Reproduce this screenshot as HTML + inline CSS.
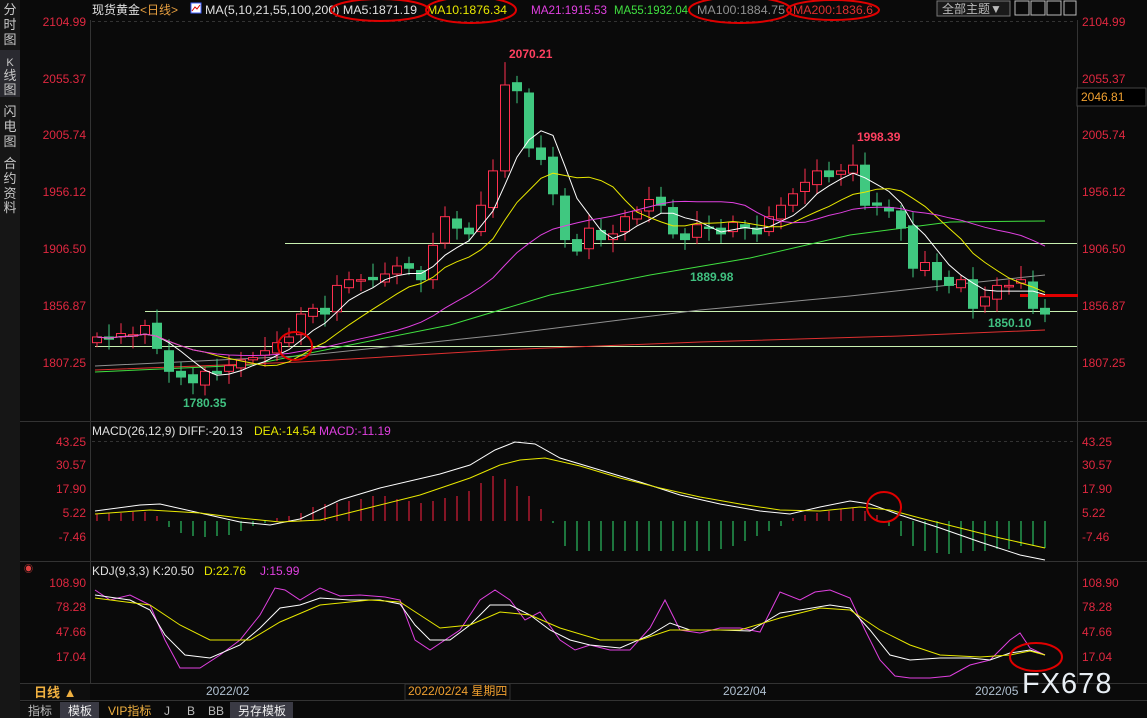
<!DOCTYPE html>
<html><head><meta charset="utf-8">
<style>
html,body{margin:0;padding:0;background:#0a0a0a;width:1147px;height:718px;overflow:hidden;font-family:"Liberation Sans","Noto Sans CJK SC",sans-serif}
svg{position:absolute;left:0;top:0}
</style></head>
<body>
<svg id="s" width="1147" height="718" xmlns="http://www.w3.org/2000/svg" font-family="Liberation Sans, Noto Sans CJK SC, sans-serif">
<rect width="1147" height="718" fill="#0a0a0a"/>
<rect x="0" y="0" width="20" height="718" fill="#161616"/>
<rect x="0" y="50" width="20" height="47" fill="#2a2a30"/>
<g fill="#c8c8c8" font-size="13" text-anchor="middle">
<text x="10" y="14">分</text><text x="10" y="29">时</text><text x="10" y="44">图</text>
<text x="10" y="66" font-size="11">K</text><text x="10" y="80">线</text><text x="10" y="94">图</text>
<text x="10" y="116">闪</text><text x="10" y="131">电</text><text x="10" y="146">图</text>
<text x="10" y="168">合</text><text x="10" y="183">约</text><text x="10" y="198">资</text><text x="10" y="212">料</text>
</g>
<g stroke="#333" stroke-width="1">
<line x1="90.5" y1="20" x2="90.5" y2="684"/>
<line x1="1077.5" y1="20" x2="1077.5" y2="684"/>
<line x1="20" y1="421.5" x2="1147" y2="421.5"/>
<line x1="20" y1="561.5" x2="1147" y2="561.5"/>
<line x1="20" y1="683.5" x2="1147" y2="683.5"/>
<line x1="20" y1="700.5" x2="1147" y2="700.5"/>
</g>
<line x1="92" y1="21.5" x2="1076" y2="21.5" stroke="#333" stroke-dasharray="3,3"/>
<line x1="92" y1="441.5" x2="1076" y2="441.5" stroke="#333" stroke-dasharray="3,3"/>
<text x="92" y="14" font-size="12" fill="#e0e0e0">现货黄金<tspan fill="#e8a040">&lt;日线&gt;</tspan></text>
<rect x="191" y="3" width="10" height="10" fill="#fff" stroke="#4060ff"/>
<polyline points="192,11 195,7 197,9 200,5" stroke="#d00" fill="none"/>
<text x="205" y="14" font-size="12" fill="#e0e0e0" textLength="212" lengthAdjust="spacingAndGlyphs">MA(5,10,21,55,100,200) MA5:1871.19</text>
<text x="427" y="14" font-size="12" fill="#e8e800" textLength="80" lengthAdjust="spacingAndGlyphs">MA10:1876.34</text>
<text x="531" y="14" font-size="12" fill="#e040e0" textLength="76" lengthAdjust="spacingAndGlyphs">MA21:1915.53</text>
<text x="614" y="14" font-size="12" fill="#40e040" textLength="74" lengthAdjust="spacingAndGlyphs">MA55:1932.04</text>
<text x="697" y="14" font-size="12" fill="#909090" textLength="88" lengthAdjust="spacingAndGlyphs">MA100:1884.75</text>
<text x="793" y="14" font-size="12" fill="#e03030" textLength="80" lengthAdjust="spacingAndGlyphs">MA200:1836.6</text>
<g fill="none" stroke="#e00000" stroke-width="2">
<ellipse cx="380" cy="10" rx="49" ry="11"/><ellipse cx="471" cy="10" rx="45" ry="13"/>
<ellipse cx="740" cy="10" rx="51" ry="13"/><ellipse cx="833" cy="10" rx="46" ry="10"/>
</g>
<rect x="937" y="1" width="73" height="15" fill="#1a1a1a" stroke="#777"/>
<text x="942" y="13" font-size="12" fill="#bbb">全部主题▼</text>
<g fill="none" stroke="#bbb"><rect x="1015" y="1" width="14" height="14"/><rect x="1031" y="1" width="14" height="14"/><rect x="1047" y="1" width="14" height="14"/><rect x="1064" y="1" width="12" height="14"/></g>
<g font-size="12" fill="#e02840">
<text x="86" y="26" text-anchor="end">2104.99</text><text x="86" y="83" text-anchor="end">2055.37</text>
<text x="86" y="139" text-anchor="end">2005.74</text><text x="86" y="196" text-anchor="end">1956.12</text>
<text x="86" y="253" text-anchor="end">1906.50</text><text x="86" y="310" text-anchor="end">1856.87</text>
<text x="86" y="367" text-anchor="end">1807.25</text>
<text x="1082" y="26">2104.99</text><text x="1082" y="83">2055.37</text>
<text x="1082" y="139">2005.74</text><text x="1082" y="196">1956.12</text>
<text x="1082" y="253">1906.50</text><text x="1082" y="310">1856.87</text>
<text x="1082" y="367">1807.25</text>
<text x="86" y="446" text-anchor="end">43.25</text><text x="86" y="469" text-anchor="end">30.57</text>
<text x="86" y="493" text-anchor="end">17.90</text><text x="86" y="517" text-anchor="end">5.22</text>
<text x="86" y="541" text-anchor="end">-7.46</text>
<text x="1082" y="446">43.25</text><text x="1082" y="469">30.57</text>
<text x="1082" y="493">17.90</text><text x="1082" y="517">5.22</text><text x="1082" y="541">-7.46</text>
<text x="86" y="587" text-anchor="end">108.90</text><text x="86" y="611" text-anchor="end">78.28</text>
<text x="86" y="636" text-anchor="end">47.66</text><text x="86" y="661" text-anchor="end">17.04</text>
<text x="1082" y="587">108.90</text><text x="1082" y="611">78.28</text>
<text x="1082" y="636">47.66</text><text x="1082" y="661">17.04</text>
</g>
<rect x="1077" y="88" width="69" height="18" fill="#000" stroke="#444"/>
<text x="1081" y="101" font-size="12" fill="#f0a030">2046.81</text>
<g stroke="#c8f0b0" stroke-width="1">
<line x1="285" y1="243.5" x2="1077" y2="243.5"/>
<line x1="145" y1="311.5" x2="1077" y2="311.5"/>
<line x1="95" y1="346.5" x2="1077" y2="346.5"/>
</g>
<rect x="1020" y="294" width="58" height="3" fill="#e00000"/>
<polyline points="95,370 300,362 500,350 700,342 900,336 1045,330" stroke="#e03030" fill="none"/>
<polyline points="95,366 300,356 500,335 700,310 850,296 950,285 1045,275" stroke="#909090" fill="none"/>
<polyline points="95,372 250,365 350,345 450,325 550,295 650,275 750,258 850,235 950,222 1045,221" stroke="#40e040" fill="none"/>
<g id="cand"></g>
<g font-size="12" font-weight="bold">
<text x="509" y="58" fill="#ff4060">2070.21</text>
<text x="857" y="141" fill="#ff4060">1998.39</text>
<text x="690" y="281" fill="#40c080">1889.98</text>
<text x="988" y="327" fill="#40c080">1850.10</text>
<text x="183" y="407" fill="#40c080">1780.35</text>
</g>
<ellipse cx="295" cy="346" rx="17" ry="14" fill="none" stroke="#e00000" stroke-width="2"/>
<text x="92" y="435" font-size="12" fill="#e0e0e0">MACD(26,12,9) DIFF:-20.13</text>
<text x="254" y="435" font-size="12" fill="#e8e800">DEA:-14.54</text>
<text x="319" y="435" font-size="12" fill="#e040e0">MACD:-11.19</text>
<g id="hist"></g>
<polyline points="95,511 140,505 160,504 200,513 240,522 270,525 300,519 340,500 380,488 440,474 470,465 495,450 515,442 535,444 560,458 600,470 640,482 680,495 720,504 760,511 790,514 820,507 850,501 870,504 900,515 940,528 980,542 1020,555 1045,560" stroke="#fff" fill="none"/>
<polyline points="95,514 150,510 200,513 240,518 280,522 320,520 360,510 420,495 470,478 500,465 520,460 545,458 580,466 620,478 660,488 700,497 740,504 780,510 820,511 860,507 890,510 920,518 960,528 1000,538 1045,548" stroke="#e8e800" fill="none"/>
<ellipse cx="884" cy="507" rx="17" ry="15" fill="none" stroke="#e00000" stroke-width="2"/>
<text x="24" y="572" font-size="9" fill="#e04040">◉</text>
<text x="92" y="575" font-size="12" fill="#e0e0e0">KDJ(9,3,3) K:20.50</text>
<text x="204" y="575" font-size="12" fill="#e8e800">D:22.76</text>
<text x="260" y="575" font-size="12" fill="#e040e0">J:15.99</text>
<polyline points="95,590 110,600 130,595 150,605 165,640 180,668 200,668 220,655 240,640 260,615 275,588 285,590 300,600 320,588 340,596 360,595 385,597 400,600 415,640 430,650 445,640 460,630 480,600 495,590 510,600 525,620 540,612 560,640 575,650 590,645 610,650 630,650 650,628 665,600 680,630 700,633 720,628 740,628 760,632 780,592 800,600 815,592 830,590 850,598 865,630 880,660 895,676 910,678 930,678 950,676 970,665 990,660 1010,640 1020,633 1030,648 1045,655" stroke="#e040e0" fill="none"/>
<polyline points="95,595 130,600 150,610 165,635 185,655 210,658 240,645 260,628 280,608 300,605 320,598 350,600 380,600 400,604 415,625 430,640 450,640 470,625 490,605 510,605 530,615 550,630 570,640 590,645 620,648 650,635 670,623 690,630 720,630 750,631 780,613 800,610 830,605 850,608 870,630 890,655 910,660 940,658 970,658 990,660 1010,653 1030,650 1045,655" stroke="#fff" fill="none"/>
<polyline points="95,598 150,605 180,625 210,640 250,640 280,622 320,605 370,600 400,602 420,615 440,628 470,625 500,612 530,615 560,628 600,640 640,640 670,630 700,630 740,630 780,618 820,608 850,610 880,630 910,645 940,655 980,657 1010,655 1030,651 1045,655" stroke="#e8e800" fill="none"/>
<ellipse cx="1036" cy="657" rx="26" ry="14" fill="none" stroke="#e00000" stroke-width="2"/>
<rect x="20" y="684" width="70" height="16" fill="#0e0e0e"/>
<text x="34" y="697" font-size="13" font-weight="bold" fill="#f0b040">日线 ▲</text>
<text x="206" y="695" font-size="12" fill="#b0c0d0">2022/02</text>
<rect x="405" y="684" width="105" height="16" fill="#0a0a0a" stroke="#333"/>
<text x="408" y="695" font-size="12" fill="#f0a030">2022/02/24 星期四</text>
<text x="723" y="695" font-size="12" fill="#b0c0d0">2022/04</text>
<text x="975" y="695" font-size="12" fill="#b0c0d0">2022/05</text>
<text x="1022" y="693" font-size="29" fill="#e8eef4" letter-spacing="1">FX678</text>
<rect x="20" y="702" width="40" height="16" fill="#111"/>
<rect x="60" y="702" width="39" height="16" fill="#3a3a44"/>
<rect x="230" y="702" width="63" height="16" fill="#3a3a44"/>
<g font-size="12">
<text x="28" y="715" fill="#bbb">指标</text>
<text x="68" y="715" fill="#eee">模板</text>
<text x="108" y="715" fill="#f0b040">VIP指标</text>
<text x="164" y="715" fill="#bbb">J</text>
<text x="187" y="715" fill="#bbb">B</text>
<text x="208" y="715" fill="#bbb">BB</text>
<text x="238" y="715" fill="#eee">另存模板</text>
</g>
</svg>
<script>
var C=[1830,1828,1833,1832,1840,1820,1800,1795,1790,1800,1798,1805,1810,1812,1818,1825,1830,1850,1855,1850,1875,1880,1880,1880,1885,1892,1890,1880,1910,1935,1925,1920,1945,1975,2050,2045,1995,1985,1955,1915,1905,1925,1915,1920,1935,1940,1950,1945,1920,1915,1928,1925,1920,1930,1925,1920,1935,1945,1955,1965,1975,1970,1975,1980,1945,1945,1940,1925,1890,1895,1880,1875,1880,1855,1865,1875,1875,1880,1855,1850];
function Y(p){return 22+(2104.99-p)/0.8731}
var ns="http://www.w3.org/2000/svg",g=document.getElementById('cand'),h=document.getElementById('hist');
function el(t,a,p){var e=document.createElementNS(ns,t);for(var k in a)e.setAttribute(k,a[k]);(p||g).appendChild(e);return e}
var step=(1045-97)/(C.length-1),pts={5:[],10:[],21:[]};
for(var i=0;i<C.length;i++){var x=97+i*step,c=C[i],o=i?C[i-1]+(i%3-1)*2:1825;var up=c>=o;var hi=Math.max(o,c)+4+(i*7%9),lo=Math.min(o,c)-4-(i*5%8);
if(i==34)hi=2070;if(i==63)hi=1998;if(i==8)lo=1780;if(i==78)lo=1850;
var col=up?'#ff3050':'#40c880';el('line',{x1:x,x2:x,y1:Y(hi),y2:Y(lo),stroke:col});
var t=Y(Math.max(o,c)),b=Y(Math.min(o,c));if(b-t<1.5)b=t+1.5;
el('rect',{x:x-4.5,y:t,width:9,height:b-t,fill:up?'#0a0a0a':col,stroke:col});
[5,10,21].forEach(function(n){var a=0,k=0;for(var j=Math.max(0,i-n+1);j<=i;j++){a+=C[j];k++}pts[n].push(x.toFixed(1)+','+Y(a/k).toFixed(1))});
}
var cols={5:'#ffffff',10:'#e8e800',21:'#e040e0'};
[5,10,21].forEach(function(n){el('polyline',{points:pts[n].join(' '),stroke:cols[n],fill:'none'})});
var H=[7,8,8,9,9,5,-6,-12,-15,-16,-15,-14,-10,-5,-2,3,5,8,14,17,18,20,22,25,25,22,20,18,20,23,25,30,38,45,42,35,25,12,-2,-25,-30,-30,-30,-30,-30,-30,-30,-30,-30,-30,-30,-30,-28,-25,-20,-15,-10,-5,3,6,8,10,12,13,10,6,-5,-15,-25,-30,-32,-33,-32,-30,-30,-28,-28,-25,-25,-27];
for(var i=0;i<H.length&&i<C.length;i++){var x=97+i*step,v=H[i];el('line',{x1:x,x2:x,y1:521,y2:521-v,stroke:v>0?'#ff2040':'#30e070'},h)}
</script>
</body></html>
